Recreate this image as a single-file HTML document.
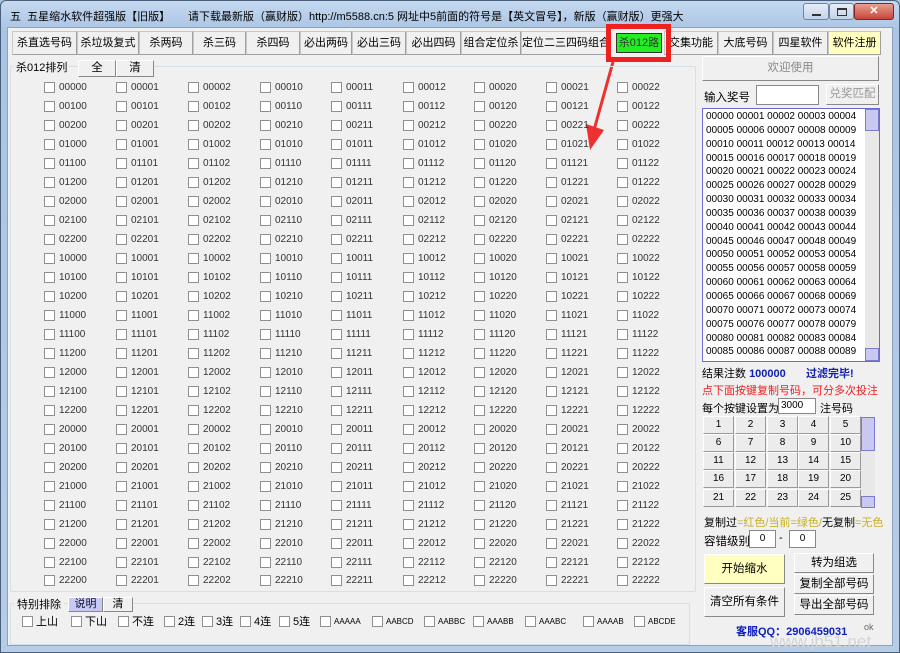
<!DOCTYPE html>
<html><head><meta charset="utf-8"><style>
*{margin:0;padding:0;box-sizing:border-box}
body{width:900px;height:653px;overflow:hidden;background:#aac4e0;font-family:"Liberation Sans","Noto Sans CJK SC",sans-serif;font-size:11px;color:#000;position:relative}
.a{position:absolute}
#win{left:0;top:0;width:900px;height:653px;background:linear-gradient(#c5d9f0,#a9c4e4 30px,#b6cde8);border:1px solid #4a5f7a;border-radius:6px 6px 0 0}
#client{left:7px;top:27px;width:886px;height:619px;background:#f0f0f0;border:1px solid #8ba2bf}
.tb{top:31px;height:24px;border:1px solid #c8c8c8;border-right-color:#a0a0a0;border-bottom-color:#a0a0a0;background:#f0f0f0;text-align:center;line-height:22px;font-size:11px;white-space:nowrap;overflow:hidden}
.grp{border:1px solid #d5dfe5;border-radius:2px}
.btn{border:1px solid #fff;border-right-color:#888;border-bottom-color:#888;background:#f0f0f0;text-align:center;font-size:11.5px}
.row{position:absolute;left:44px;height:14px;font-size:10px;line-height:12px;color:#333}
.row i{position:absolute;font-style:normal;padding-left:15px}
.row i::before{content:"";position:absolute;left:0;top:0;width:11px;height:11px;background:#fff;border:1px solid #8e8f8f;box-sizing:border-box}
.row i:nth-child(1){left:0}.row i:nth-child(2){left:72px}.row i:nth-child(3){left:144px}.row i:nth-child(4){left:216px}.row i:nth-child(5){left:287px}.row i:nth-child(6){left:359px}.row i:nth-child(7){left:430px}.row i:nth-child(8){left:502px}.row i:nth-child(9){left:573px}
#list{left:702px;top:108px;width:178px;height:254px;background:#fff;border:1px solid #6a6ad0;font-size:10px;line-height:13.85px;padding:1px 0 0 3px;white-space:pre;font-family:"Liberation Sans",sans-serif}
.sb{background:#e8e8e8}
.sth{background:#c8c8f0;border:1px solid #7a7ad0}
#pad{left:703px;top:416px;width:158px;height:92px}
#pad b{position:absolute;width:31px;height:18px;border:1px solid #fff;border-right-color:#999;border-bottom-color:#999;background:#ececec;font-weight:normal;text-align:center;line-height:16px;font-size:10px}
.sp{font-size:10px;line-height:12px;position:absolute;top:616px;padding-left:14px;white-space:nowrap}
.sp::before{content:"";position:absolute;left:0;top:0;width:11px;height:11px;background:#fff;border:1px solid #8e8f8f;box-sizing:border-box}
</style></head><body>
<div id="win" class="a"></div>
<div class="a" style="left:10px;top:8px;font-size:11px">五&nbsp; 五星缩水软件超强版【旧版】</div>
<div class="a" style="left:188px;top:8px;font-size:11px;white-space:nowrap">请下载最新版（赢财版）http://m5588.cn:5 网址中5前面的符号是【英文冒号】，新版（赢财版）更强大</div>
<div class="a" style="left:803px;top:3px;width:26px;height:17px;border:1px solid #6f84a0;border-radius:3px;background:linear-gradient(#e6eef8,#c2d3e8)"><div class="a" style="left:8px;top:10px;width:9px;height:2px;background:#333"></div></div>
<div class="a" style="left:829px;top:3px;width:25px;height:17px;border:1px solid #6f84a0;border-radius:3px;background:linear-gradient(#e6eef8,#c2d3e8)"><div class="a" style="left:7px;top:4px;width:10px;height:8px;border:1px solid #333;border-top-width:2px"></div></div>
<div class="a" style="left:854px;top:3px;width:40px;height:17px;border:1px solid #7a2a20;border-radius:3px;background:linear-gradient(#e8a090,#c8443a);color:#fff;text-align:center;font-weight:bold;line-height:15px">✕</div>
<div id="client" class="a"></div>

<div class="a tb" style="left:12px;width:65px">杀直选号码</div>
<div class="a tb" style="left:77px;width:62px">杀垃圾复式</div>
<div class="a tb" style="left:139px;width:54px">杀两码</div>
<div class="a tb" style="left:193px;width:53px">杀三码</div>
<div class="a tb" style="left:246px;width:54px">杀四码</div>
<div class="a tb" style="left:300px;width:52px">必出两码</div>
<div class="a tb" style="left:352px;width:54px">必出三码</div>
<div class="a tb" style="left:406px;width:55px">必出四码</div>
<div class="a tb" style="left:461px;width:60px">组合定位杀</div>
<div class="a tb" style="left:521px;width:90px">定位二三四码组合</div>
<div class="a tb" style="left:664px;width:54px">交集功能</div>
<div class="a tb" style="left:718px;width:55px">大底号码</div>
<div class="a tb" style="left:773px;width:55px">四星软件</div>
<div class="a tb" style="left:828px;width:53px;background:#ffffc0">软件注册</div>
<div class="a" style="left:606px;top:24px;width:65px;height:38px;border:5px solid #ee2020"></div>
<div class="a" style="left:616px;top:33px;width:46px;height:20px;background:#22ee22;border:1px solid #333;text-align:center;line-height:18px;font-size:11px;color:#333">杀012路</div>
<svg class="a" style="left:580px;top:60px" width="40" height="92"><line x1="33" y1="2" x2="14" y2="70" stroke="#ee3030" stroke-width="3"/><polygon points="6,64 24,70 10,90" fill="#ee3030"/></svg>

<div class="a grp" style="left:10px;top:66px;width:686px;height:526px"></div>
<div class="a" style="left:14px;top:59px;background:#f0f0f0;padding:0 2px;font-size:11px">杀012排列</div>
<div class="a btn" style="left:78px;top:60px;width:38px;height:17px;line-height:15px">全</div>
<div class="a btn" style="left:116px;top:60px;width:38px;height:17px;line-height:15px">清</div>

<div class="row" style="top:82px"><i>00000</i><i>00001</i><i>00002</i><i>00010</i><i>00011</i><i>00012</i><i>00020</i><i>00021</i><i>00022</i></div>
<div class="row" style="top:101px"><i>00100</i><i>00101</i><i>00102</i><i>00110</i><i>00111</i><i>00112</i><i>00120</i><i>00121</i><i>00122</i></div>
<div class="row" style="top:120px"><i>00200</i><i>00201</i><i>00202</i><i>00210</i><i>00211</i><i>00212</i><i>00220</i><i>00221</i><i>00222</i></div>
<div class="row" style="top:139px"><i>01000</i><i>01001</i><i>01002</i><i>01010</i><i>01011</i><i>01012</i><i>01020</i><i>01021</i><i>01022</i></div>
<div class="row" style="top:158px"><i>01100</i><i>01101</i><i>01102</i><i>01110</i><i>01111</i><i>01112</i><i>01120</i><i>01121</i><i>01122</i></div>
<div class="row" style="top:177px"><i>01200</i><i>01201</i><i>01202</i><i>01210</i><i>01211</i><i>01212</i><i>01220</i><i>01221</i><i>01222</i></div>
<div class="row" style="top:196px"><i>02000</i><i>02001</i><i>02002</i><i>02010</i><i>02011</i><i>02012</i><i>02020</i><i>02021</i><i>02022</i></div>
<div class="row" style="top:215px"><i>02100</i><i>02101</i><i>02102</i><i>02110</i><i>02111</i><i>02112</i><i>02120</i><i>02121</i><i>02122</i></div>
<div class="row" style="top:234px"><i>02200</i><i>02201</i><i>02202</i><i>02210</i><i>02211</i><i>02212</i><i>02220</i><i>02221</i><i>02222</i></div>
<div class="row" style="top:253px"><i>10000</i><i>10001</i><i>10002</i><i>10010</i><i>10011</i><i>10012</i><i>10020</i><i>10021</i><i>10022</i></div>
<div class="row" style="top:272px"><i>10100</i><i>10101</i><i>10102</i><i>10110</i><i>10111</i><i>10112</i><i>10120</i><i>10121</i><i>10122</i></div>
<div class="row" style="top:291px"><i>10200</i><i>10201</i><i>10202</i><i>10210</i><i>10211</i><i>10212</i><i>10220</i><i>10221</i><i>10222</i></div>
<div class="row" style="top:310px"><i>11000</i><i>11001</i><i>11002</i><i>11010</i><i>11011</i><i>11012</i><i>11020</i><i>11021</i><i>11022</i></div>
<div class="row" style="top:329px"><i>11100</i><i>11101</i><i>11102</i><i>11110</i><i>11111</i><i>11112</i><i>11120</i><i>11121</i><i>11122</i></div>
<div class="row" style="top:348px"><i>11200</i><i>11201</i><i>11202</i><i>11210</i><i>11211</i><i>11212</i><i>11220</i><i>11221</i><i>11222</i></div>
<div class="row" style="top:367px"><i>12000</i><i>12001</i><i>12002</i><i>12010</i><i>12011</i><i>12012</i><i>12020</i><i>12021</i><i>12022</i></div>
<div class="row" style="top:386px"><i>12100</i><i>12101</i><i>12102</i><i>12110</i><i>12111</i><i>12112</i><i>12120</i><i>12121</i><i>12122</i></div>
<div class="row" style="top:405px"><i>12200</i><i>12201</i><i>12202</i><i>12210</i><i>12211</i><i>12212</i><i>12220</i><i>12221</i><i>12222</i></div>
<div class="row" style="top:424px"><i>20000</i><i>20001</i><i>20002</i><i>20010</i><i>20011</i><i>20012</i><i>20020</i><i>20021</i><i>20022</i></div>
<div class="row" style="top:443px"><i>20100</i><i>20101</i><i>20102</i><i>20110</i><i>20111</i><i>20112</i><i>20120</i><i>20121</i><i>20122</i></div>
<div class="row" style="top:462px"><i>20200</i><i>20201</i><i>20202</i><i>20210</i><i>20211</i><i>20212</i><i>20220</i><i>20221</i><i>20222</i></div>
<div class="row" style="top:481px"><i>21000</i><i>21001</i><i>21002</i><i>21010</i><i>21011</i><i>21012</i><i>21020</i><i>21021</i><i>21022</i></div>
<div class="row" style="top:500px"><i>21100</i><i>21101</i><i>21102</i><i>21110</i><i>21111</i><i>21112</i><i>21120</i><i>21121</i><i>21122</i></div>
<div class="row" style="top:519px"><i>21200</i><i>21201</i><i>21202</i><i>21210</i><i>21211</i><i>21212</i><i>21220</i><i>21221</i><i>21222</i></div>
<div class="row" style="top:538px"><i>22000</i><i>22001</i><i>22002</i><i>22010</i><i>22011</i><i>22012</i><i>22020</i><i>22021</i><i>22022</i></div>
<div class="row" style="top:557px"><i>22100</i><i>22101</i><i>22102</i><i>22110</i><i>22111</i><i>22112</i><i>22120</i><i>22121</i><i>22122</i></div>
<div class="row" style="top:575px"><i>22200</i><i>22201</i><i>22202</i><i>22210</i><i>22211</i><i>22212</i><i>22220</i><i>22221</i><i>22222</i></div>

<div class="a grp" style="left:10px;top:603px;width:680px;height:42px"></div>
<div class="a" style="left:14px;top:596px;background:#f0f0f0;padding:0 3px;font-size:11px">特别排除</div>
<div class="a btn" style="left:68px;top:597px;width:35px;height:15px;line-height:13px;background:#c8c8f4;color:#113;font-size:11px">说明</div>
<div class="a btn" style="left:103px;top:597px;width:30px;height:15px;line-height:13px;font-size:11px">清</div>
<span class="sp" style="left:22px;font-size:11px">上山</span>
<span class="sp" style="left:71px;font-size:11px">下山</span>
<span class="sp" style="left:118px;font-size:11px">不连</span>
<span class="sp" style="left:164px;font-size:11px">2连</span>
<span class="sp" style="left:202px;font-size:11px">3连</span>
<span class="sp" style="left:240px;font-size:11px">4连</span>
<span class="sp" style="left:279px;font-size:11px">5连</span>
<span class="sp" style="left:320px;font-size:8px">AAAAA</span>
<span class="sp" style="left:372px;font-size:8px">AABCD</span>
<span class="sp" style="left:424px;font-size:8px">AABBC</span>
<span class="sp" style="left:473px;font-size:8px">AAABB</span>
<span class="sp" style="left:525px;font-size:8px">AAABC</span>
<span class="sp" style="left:583px;font-size:8px">AAAAB</span>
<span class="sp" style="left:634px;font-size:8px">ABCDE</span>

<div class="a btn" style="left:702px;top:56px;width:177px;height:25px;line-height:23px;color:#888">欢迎使用</div>
<div class="a" style="left:704px;top:89px;font-size:11.5px">输入奖号</div>
<div class="a" style="left:756px;top:85px;width:63px;height:20px;background:#fff;border:1px solid #888"></div>
<div class="a btn" style="left:826px;top:84px;width:53px;height:21px;line-height:19px;color:#999">兑奖匹配</div>
<div id="list" class="a">00000 00001 00002 00003 00004
00005 00006 00007 00008 00009
00010 00011 00012 00013 00014
00015 00016 00017 00018 00019
00020 00021 00022 00023 00024
00025 00026 00027 00028 00029
00030 00031 00032 00033 00034
00035 00036 00037 00038 00039
00040 00041 00042 00043 00044
00045 00046 00047 00048 00049
00050 00051 00052 00053 00054
00055 00056 00057 00058 00059
00060 00061 00062 00063 00064
00065 00066 00067 00068 00069
00070 00071 00072 00073 00074
00075 00076 00077 00078 00079
00080 00081 00082 00083 00084
00085 00086 00087 00088 00089</div>
<div class="a sb" style="left:865px;top:109px;width:14px;height:252px"></div>
<div class="a sth" style="left:865px;top:109px;width:14px;height:22px"></div>
<div class="a sth" style="left:865px;top:348px;width:14px;height:13px"></div>

<div class="a" style="left:702px;top:365px;font-size:11px">结果注数 <b style="color:#1020b0">100000</b></div>
<div class="a" style="left:806px;top:365px;font-size:11px;color:#1020b0;font-weight:bold">过滤完毕!</div>
<div class="a" style="left:702px;top:382px;font-size:11px;color:#ee2020">点下面按键复制号码，可分多次投注</div>
<div class="a" style="left:702px;top:400px;font-size:11px">每个按键设置为</div>
<div class="a" style="left:778px;top:398px;width:38px;height:16px;background:#fff;border:1px solid #888;font-size:10px;line-height:14px;padding-left:2px">3000</div>
<div class="a" style="left:820px;top:400px;font-size:11px">注号码</div>
<div id="pad" class="a">
<b style="left:0;top:0">1</b><b style="left:32px;top:0">2</b><b style="left:64px;top:0">3</b><b style="left:95px;top:0">4</b><b style="left:127px;top:0">5</b>
<b style="left:0;top:18px">6</b><b style="left:32px;top:18px">7</b><b style="left:64px;top:18px">8</b><b style="left:95px;top:18px">9</b><b style="left:127px;top:18px">10</b>
<b style="left:0;top:36px">11</b><b style="left:32px;top:36px">12</b><b style="left:64px;top:36px">13</b><b style="left:95px;top:36px">14</b><b style="left:127px;top:36px">15</b>
<b style="left:0;top:54px">16</b><b style="left:32px;top:54px">17</b><b style="left:64px;top:54px">18</b><b style="left:95px;top:54px">19</b><b style="left:127px;top:54px">20</b>
<b style="left:0;top:73px">21</b><b style="left:32px;top:73px">22</b><b style="left:64px;top:73px">23</b><b style="left:95px;top:73px">24</b><b style="left:127px;top:73px">25</b>
</div>
<div class="a sb" style="left:861px;top:417px;width:14px;height:91px"></div>
<div class="a sth" style="left:861px;top:417px;width:14px;height:34px"></div>
<div class="a sth" style="left:861px;top:496px;width:14px;height:12px"></div>
<div class="a" style="left:704px;top:514px;font-size:11px">复制过<span style="color:#c8b020">=红色/当前=绿色/</span>无复制<span style="color:#c8b020">=无色</span></div>
<div class="a" style="left:704px;top:533px;font-size:11.5px">容错级别</div>
<div class="a" style="left:749px;top:530px;width:27px;height:18px;background:#fff;border:1px solid #888;text-align:center;font-size:10px;line-height:16px">0</div>
<div class="a" style="left:779px;top:532px">-</div>
<div class="a" style="left:789px;top:530px;width:27px;height:18px;background:#fff;border:1px solid #888;text-align:center;font-size:10px;line-height:16px">0</div>
<div class="a btn" style="left:704px;top:554px;width:81px;height:30px;line-height:28px;background:#ffffc0">开始缩水</div>
<div class="a btn" style="left:704px;top:587px;width:81px;height:30px;line-height:28px">清空所有条件</div>
<div class="a btn" style="left:794px;top:553px;width:80px;height:20px;line-height:18px">转为组选</div>
<div class="a btn" style="left:794px;top:574px;width:80px;height:20px;line-height:18px">复制全部号码</div>
<div class="a btn" style="left:794px;top:595px;width:80px;height:20px;line-height:18px">导出全部号码</div>
<div class="a" style="left:736px;top:623px;font-size:11px;color:#1020c0;font-weight:bold">客服QQ：2906459031</div>
<div class="a" style="left:864px;top:622px;font-size:9px;color:#666">ok</div>
<div class="a" style="left:770px;top:632px;font-size:17px;color:#d4d4d4">www.jb51.net</div>
</body></html>
